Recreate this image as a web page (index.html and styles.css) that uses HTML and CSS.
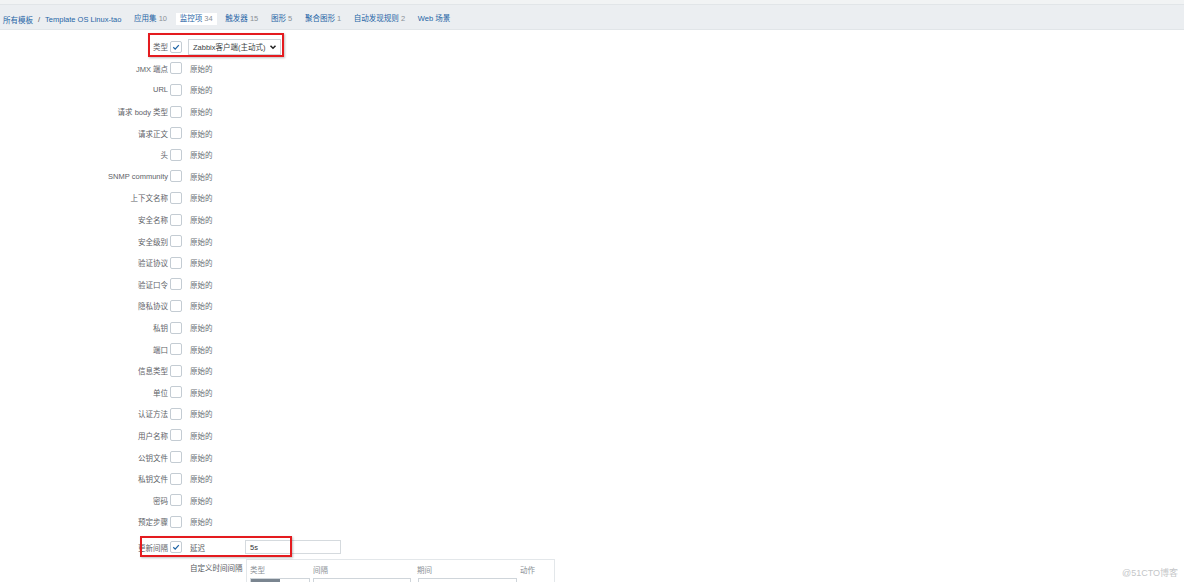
FILE: index.html
```html
<!DOCTYPE html>
<html lang="zh-CN">
<head>
    <meta charset="UTF-8">
    <title>监控项批量更新</title>
    <link rel="stylesheet" href="styles.css">
</head>
<body>
    <div class="top-strip"></div>
    <div class="nav">
        <a class="crumb">所有模板</a>
        <span class="sep">/</span>
        <a class="crumb">Template OS Linux-tao</a>
        <a class="tab">应用集 <span class="num">10</span></a>
        <a class="tab active">监控项 <span class="num">34</span></a>
        <a class="tab">触发器 <span class="num">15</span></a>
        <a class="tab">图形 <span class="num">5</span></a>
        <a class="tab">聚合图形 <span class="num">1</span></a>
        <a class="tab">自动发现规则 <span class="num">2</span></a>
        <a class="tab">Web 场景</a>
    </div>

    <div class="form" id="form">
        <div class="row">
            <label>类型</label>
            <span class="check on"><svg viewBox="0 0 11 11"><path d="M2.5 5.8 L4.6 7.8 L8.6 3.4"/></svg></span>
            <div class="select"><span>Zabbix客户端(主动式)</span><svg viewBox="0 0 8 8"><path d="M1.5 2.8 L4 5.3 L6.5 2.8"/></svg></div>
        </div>
    </div>

    <div class="mark mark-type"></div>
    <div class="mark mark-delay"></div>
    <div class="watermark">@51CTO博客</div>

    <script>
        // 其余字段都是未勾选的“原始的”行
        const fields = ['JMX 端点', 'URL', '请求 body 类型', '请求正文', '头', 'SNMP community',
            '上下文名称', '安全名称', '安全级别', '验证协议', '验证口令', '隐私协议', '私钥',
            '端口', '信息类型', '单位', '认证方法', '用户名称', '公钥文件', '私钥文件', '密码', '预定步骤'];
        const form = document.getElementById('form');
        fields.forEach(function (name) {
            const row = document.createElement('div');
            row.className = 'row';
            row.innerHTML = '<label>' + name + '</label><span class="check"></span><span class="orig">原始的</span>';
            form.appendChild(row);
        });

        const delay = document.createElement('div');
        delay.className = 'row delay';
        delay.innerHTML = '<label>更新间隔</label>' +
            '<span class="check on"><svg viewBox="0 0 11 11"><path d="M2.5 5.8 L4.6 7.8 L8.6 3.4"/></svg></span>' +
            '<span class="sub-label">延迟</span><span class="input">5s</span>';
        form.appendChild(delay);

        const custom = document.createElement('div');
        custom.className = 'row custom';
        custom.innerHTML = '<label></label><span class="check blank"></span>' +
            '<span class="sub-label wide">自定义时间间隔</span>' +
            '<div class="intervals">' +
            '<div class="iv-head"><span class="c1">类型</span><span class="c2">间隔</span><span class="c3">期间</span><span>动作</span></div>' +
            '<div class="iv-row"><span class="seg"><i class="dark"></i><i></i></span><span class="field f2"></span><span class="field f3"></span></div>' +
            '</div>';
        form.appendChild(custom);
    </script>
</body>
</html>
```
FILE: styles.css
```css
html, body {
    margin: 0;
    overflow: hidden;
}
body {
    font-family: "Liberation Sans", "Noto Sans CJK SC", sans-serif;
    font-size: 7.5px;
    color: #4a4f55;
    background-color: #fff;
    width: 1184px;
    height: 582px;
}
.top-strip {
    height: 4px;
    background-color: #f1f3f4;
    border-bottom: 1px solid #e1e5e8;
}
.nav {
    height: 25px;
    background-color: #ebeef1;
    border-bottom: 1px solid #e1e5e8;
    display: flex;
    align-items: center;
    padding: 4px 0 0 3px;
    box-sizing: border-box;
}
.nav a {
    color: #1f65a6;
    white-space: nowrap;
}
.sep {
    color: #555;
    margin: 0 5px;
}
.tab {
    padding: 2px 4px;
    margin-left: 4.7px;
    line-height: 8px;
}
.crumb + .sep + .crumb {
    margin-right: 4px;
}
.tab.active {
    background-color: #fff;
}
.num {
    color: #8a9096;
}
.form {
    padding-top: 6px;
}
.row {
    display: flex;
    align-items: center;
    height: 21.6px;
}
.row label {
    width: 168px;
    text-align: right;
    color: #5e6267;
    white-space: nowrap;
}
.check {
    width: 10px;
    height: 10px;
    border: 1px solid #c4ccd3;
    border-radius: 2px;
    margin-left: 2px;
    margin-right: 8px;
    background-color: #fff;
    flex: none;
}
.check svg {
    width: 10px;
    height: 10px;
    display: block;
}
.check path {
    fill: none;
    stroke: #1f65a6;
    stroke-width: 1.4;
}
.check.blank {
    visibility: hidden;
}
.orig {
    color: #6b7075;
}
.select {
    width: 93px;
    height: 16px;
    box-sizing: border-box;
    border: 1px solid #cfd5da;
    margin-left: -2px;
    padding: 0 3px 0 4px;
    display: flex;
    align-items: center;
    justify-content: space-between;
    color: #3b3f44;
    white-space: nowrap;
}
.select svg {
    width: 8px;
    height: 8px;
    flex: none;
}
.select path {
    fill: none;
    stroke: #222;
    stroke-width: 1.5;
}
.sub-label {
    width: 55px;
    color: #55595e;
    white-space: nowrap;
}
.sub-label.wide {
    width: 56px;
    margin-top: 4px;
}
.input {
    width: 96px;
    height: 14px;
    box-sizing: border-box;
    border: 1px solid #d5dade;
    padding-left: 4px;
    display: flex;
    align-items: center;
    color: #333;
}
.row.delay {
    margin-top: 4px;
}
.row.custom {
    align-items: flex-start;
}
.intervals {
    width: 309px;
    height: 40px;
    border: 1px solid #e3e7ea;
    padding: 4px 3px 0;
    box-sizing: border-box;
    margin-top: 1px;
}
.iv-head {
    display: flex;
    color: #8a9096;
}
.iv-head span {
    display: block;
}
.iv-head .c1 {
    width: 63px;
}
.iv-head .c2 {
    width: 104px;
}
.iv-head .c3 {
    width: 103px;
}
.iv-row {
    display: flex;
    margin-top: 3px;
    gap: 3px;
}
.seg {
    display: flex;
    width: 60px;
    height: 14px;
    border: 1px solid #cfd5da;
    box-sizing: border-box;
}
.seg i {
    flex: 1;
}
.seg i.dark {
    background-color: #7a8590;
}
.field {
    height: 14px;
    border: 1px solid #cfd5da;
    box-sizing: border-box;
}
.f2 {
    width: 98px;
}
.f3 {
    width: 99px;
    margin-left: 4px;
}
.mark {
    position: absolute;
    border: 2px solid #e41b1f;
    box-shadow: 1px 1px 2px rgba(0, 0, 0, 0.25);
}
.mark-type {
    left: 148px;
    top: 33px;
    width: 132px;
    height: 20px;
}
.mark-delay {
    left: 140px;
    top: 536px;
    width: 148px;
    height: 17px;
}
.watermark {
    position: absolute;
    left: 1122px;
    top: 566px;
    color: #c4c6c8;
    font-size: 9px;
}
```
